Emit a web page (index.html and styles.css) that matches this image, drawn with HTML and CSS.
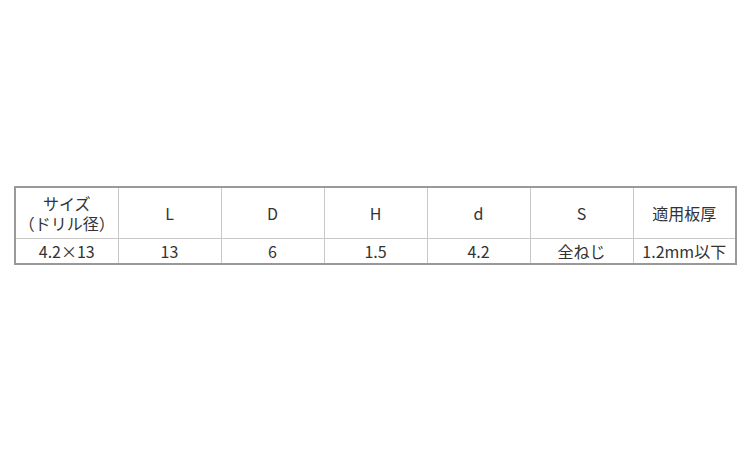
FILE: index.html
```html
<!DOCTYPE html>
<html lang="ja">
<head>
<meta charset="utf-8">
<link rel="stylesheet" href="styles.css">
</head>
<body>
<table class="spec">
  <tr class="head">
    <th>サイズ<br>（ドリル径）</th>
    <th>L</th>
    <th>D</th>
    <th>H</th>
    <th>d</th>
    <th>S</th>
    <th>適用板厚</th>
  </tr>
  <tr class="row">
    <td>4.2×13</td>
    <td>13</td>
    <td>6</td>
    <td>1.5</td>
    <td>4.2</td>
    <td>全ねじ</td>
    <td>1.2mm以下</td>
  </tr>
</table>
</body>
</html>
```
FILE: styles.css
```css
html, body {
  margin: 0;
  padding: 0;
  background: #fff;
}
body {
  padding: 186px 0 0 14px;
  font-family: "Noto Sans CJK JP", sans-serif;
  color: #333;
}
.spec {
  border-collapse: collapse;
  width: 723px;
  table-layout: fixed;
  border: 2px solid #999;
}
.spec th, .spec td {
  border: 1px solid #c8c8c8;
  text-align: center;
  font-weight: normal;
  font-size: 16px;
  padding: 0;
}
.spec th {
  height: 50px;
  line-height: 20px;
}
.spec td {
  height: 24px;
  line-height: 20px;
}
```
